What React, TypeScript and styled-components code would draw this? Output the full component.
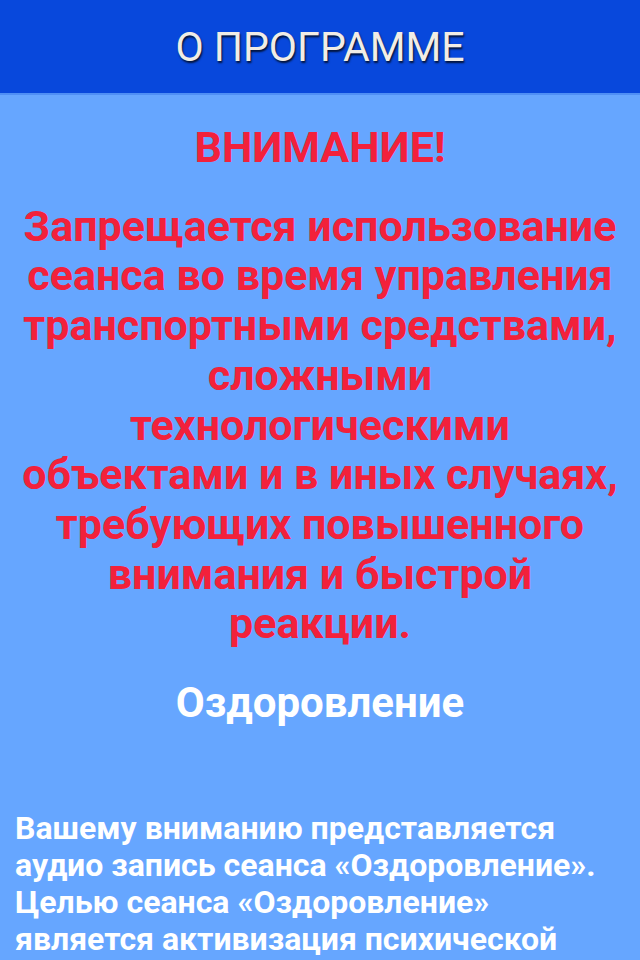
import React from "react";
import styled, { createGlobalStyle } from "styled-components";

const GlobalStyle = createGlobalStyle`
  html, body {
    margin: 0;
    padding: 0;
    background: #66a6ff;
  }
  body {
    font-family: Roboto, "Noto Sans", sans-serif;
  }
`;

const Screen = styled.div`
  width: 640px;
  min-height: 960px;
  background: #66a6ff;
  display: flex;
  flex-direction: column;
`;

const Header = styled.header`
  height: 93px;
  background: #0848dc;
  border-bottom: 2px solid #4f8ff5;
  display: flex;
  align-items: center;
  justify-content: center;
`;

const HeaderTitle = styled.h1`
  margin: 0;
  font-size: 41px;
  font-weight: 400;
  color: #f1ede6;
  text-shadow: 1px 2px 2px rgba(0, 0, 0, 0.75);
`;

const Content = styled.main`
  display: flex;
  flex-direction: column;
  padding: 0 12px;
`;

const Warning = styled.p<{ $top: number }>`
  margin: ${(p) => p.$top}px 0 0;
  font-size: 43px;
  line-height: 49.7px;
  font-weight: 700;
  color: #f2213b;
  text-align: center;
`;

const SessionTitle = styled.h2`
  margin: 29px 0 0;
  font-size: 42px;
  font-weight: 700;
  color: #ffffff;
  text-align: center;
`;

const Description = styled.p`
  margin: 83px 0 0 3px;
  font-size: 32px;
  line-height: 37px;
  font-weight: 700;
  color: #ffffff;
  text-align: left;
`;

export default function App() {
  return (
    <>
      <GlobalStyle />
      <Screen>
        <Header>
          <HeaderTitle>О ПРОГРАММЕ</HeaderTitle>
        </Header>
        <Content>
          <Warning $top={28}>ВНИМАНИЕ!</Warning>
          <Warning $top={29}>
            Запрещается использование
            <br />
            сеанса во время управления
            <br />
            транспортными средствами,
            <br />
            сложными
            <br />
            технологическими
            <br />
            объектами и в иных случаях,
            <br />
            требующих повышенного
            <br />
            внимания и быстрой
            <br />
            реакции.
          </Warning>
          <SessionTitle>Оздоровление</SessionTitle>
          <Description>
            Вашему вниманию представляется
            <br />
            аудио запись сеанса «Оздоровление».
            <br />
            Целью сеанса «Оздоровление»
            <br />
            является активизация психической
          </Description>
        </Content>
      </Screen>
    </>
  );
}
